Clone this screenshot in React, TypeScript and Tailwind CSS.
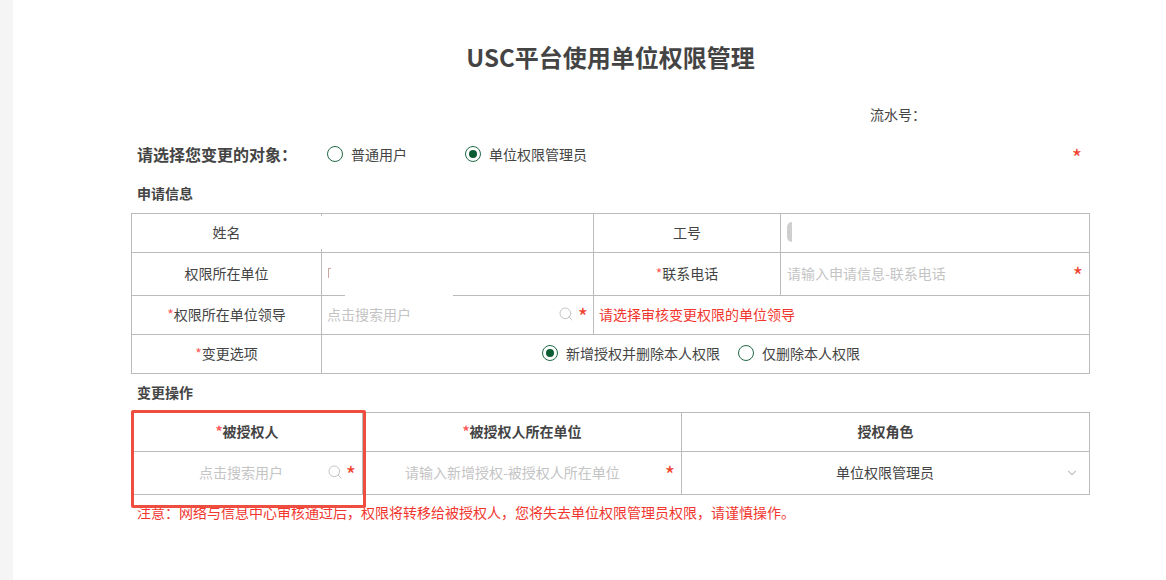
import { Search, ChevronDown } from 'lucide-react';

const Req = () => <span className="text-[#ff5a5a]">*</span>;

const Star = ({ className = '' }: { className?: string }) => (
    <span className={`text-[22px] leading-none text-[#f0442e] ${className}`}>*</span>
);

const Radio = ({ checked = false }: { checked?: boolean }) => (
    <span className="flex h-4 w-4 shrink-0 items-center justify-center rounded-full border border-[#1f6b47] bg-white">
        {checked && <span className="h-2 w-2 rounded-full bg-[#0b5c33]" />}
    </span>
);

const RadioOption = ({ label, checked }: { label: string; checked?: boolean }) => (
    <label className="flex items-center gap-2">
        <Radio checked={checked} />
        <span className="text-[14px] text-[#444]">{label}</span>
    </label>
);

const labelCell = 'border border-[#bbb] pb-[2px] text-center font-normal text-[14px] text-[#444]';
const inputCell = 'border border-[#bbb] pb-[2px] text-[14px] text-[#444]';
const headCell = 'border border-[#bbb] pb-[2px] text-[14px] font-bold text-[#444]';
const placeholder = 'text-[14px] text-[#c4c4c4]';

export default function App() {
    return (
        <div
            className="flex h-[580px] w-[1166px] overflow-hidden bg-white"
            style={{ fontFamily: '"Noto Sans CJK SC", "Noto Sans", sans-serif' }}
        >
            <div className="w-[13px] shrink-0 bg-[#f5f5f5]" />

            <main className="ml-[118px] w-[959px] shrink-0">
                <h1 className="pt-[40px] text-center text-[24px] leading-[33px] font-bold text-[#444]">
                    USC平台使用单位权限管理
                </h1>

                <div className="mt-[32px] flex justify-end pr-[164px] text-[14px] leading-[18px] text-[#444]">
                    流水号：
                </div>

                {/* Target selector */}
                <div className="mt-[20px] flex h-[22px] items-center pl-[6px]">
                    <span className="w-[190px] text-[16px] font-bold text-[#444]">请选择您变更的对象：</span>
                    <RadioOption label="普通用户" />
                    <div className="ml-[58px]">
                        <RadioOption label="单位权限管理员" checked />
                    </div>
                    <Star className="mt-[4px] ml-auto pr-[8px]" />
                </div>

                <h2 className="mt-[19px] pl-[6px] text-[14px] leading-[18px] font-bold text-[#444]">申请信息</h2>

                {/* Applicant table */}
                <div className="relative mt-[11px]">
                    <table className="w-[958px] table-fixed border-collapse">
                        <colgroup>
                            <col className="w-[190px]" />
                            <col className="w-[272px]" />
                            <col className="w-[187px]" />
                            <col className="w-[309px]" />
                        </colgroup>
                        <tbody>
                            <tr className="h-[39px]">
                                <td className={labelCell}>姓名</td>
                                <td className={inputCell} />
                                <td className={labelCell}>工号</td>
                                <td className={inputCell}>
                                    <span className="ml-[6px] block h-[20px] w-[5px] rounded-l-full bg-[#cfcfcf] blur-[0.5px]" />
                                </td>
                            </tr>
                            <tr className="h-[43px]">
                                <td className={labelCell}>权限所在单位</td>
                                <td className={inputCell}>
                                    <span className="ml-[6px] block h-[10px] w-[3px] border-t border-l border-[#c9a9a0]" />
                                </td>
                                <td className={labelCell}>
                                    <Req />联系电话
                                </td>
                                <td className={inputCell}>
                                    <div className="flex items-center justify-between px-[6px]">
                                        <span className={placeholder}>请输入申请信息-联系电话</span>
                                        <Star className="mt-[2px]" />
                                    </div>
                                </td>
                            </tr>
                            <tr className="h-[39px]">
                                <td className={labelCell}>
                                    <Req />权限所在单位领导
                                </td>
                                <td className={inputCell}>
                                    <div className="flex items-center justify-between px-[5px]">
                                        <span className={placeholder}>点击搜索用户</span>
                                        <span className="flex items-center gap-[4px]">
                                            <Search size={16} strokeWidth={1.5} className="text-[#c4c4c4]" />
                                            <Star className="mt-[2px]" />
                                        </span>
                                    </div>
                                </td>
                                <td colSpan={2} className="border border-[#bbb] pb-[2px] pl-[5px] text-[14px] text-[#f0362e]">
                                    请选择审核变更权限的单位领导
                                </td>
                            </tr>
                            <tr className="h-[39px]">
                                <td className={labelCell}>
                                    <Req />变更选项
                                </td>
                                <td colSpan={3} className={inputCell}>
                                    <div className="flex items-center justify-center gap-[18px] pr-[9px]">
                                        <RadioOption label="新增授权并删除本人权限" checked />
                                        <RadioOption label="仅删除本人权限" />
                                    </div>
                                </td>
                            </tr>
                        </tbody>
                    </table>
                    {/* blurred-out values */}
                    <div className="absolute top-[3px] left-[189px] h-[33px] w-[6px] bg-white" />
                    <div className="absolute top-[78px] left-[214px] h-[8px] w-[108px] bg-white" />
                </div>

                <h2 className="mt-[9px] pl-[6px] text-[14px] leading-[18px] font-bold text-[#444]">变更操作</h2>

                {/* Change table */}
                <div className="relative mt-[11px]">
                    <table className="w-[958px] table-fixed border-collapse">
                        <colgroup>
                            <col className="w-[231px]" />
                            <col className="w-[319px]" />
                            <col className="w-[408px]" />
                        </colgroup>
                        <tbody>
                            <tr className="h-[39px]">
                                <th className={headCell}>
                                    <Req />被授权人
                                </th>
                                <th className={headCell}>
                                    <Req />被授权人所在单位
                                </th>
                                <th className={headCell}>授权角色</th>
                            </tr>
                            <tr className="h-[43px]">
                                <td className={inputCell}>
                                    <div className="flex items-center pr-[6px] pl-[67px]">
                                        <span className={placeholder}>点击搜索用户</span>
                                        <span className="ml-auto flex items-center gap-[3px]">
                                            <Search size={16} strokeWidth={1.5} className="text-[#c4c4c4]" />
                                            <Star className="mt-[2px]" />
                                        </span>
                                    </div>
                                </td>
                                <td className={inputCell}>
                                    <div className="flex items-center pr-[6px] pl-[42px]">
                                        <span className={placeholder}>请输入新增授权-被授权人所在单位</span>
                                        <Star className="mt-[2px] ml-auto" />
                                    </div>
                                </td>
                                <td className={inputCell}>
                                    <div className="relative pr-[1px] text-center">
                                        单位权限管理员
                                        <ChevronDown size={14} className="absolute top-[4px] right-[10px] text-[#c4c4c4]" />
                                    </div>
                                </td>
                            </tr>
                        </tbody>
                    </table>
                    {/* annotation box drawn over the screenshot */}
                    <div className="absolute top-[-2px] left-0 h-[98px] w-[235px] rounded-[2px] border-[3px] border-[#ef4d3f]" />
                </div>

                <p className="mt-[8px] pl-[6px] text-[14px] leading-[18px] text-[#f0362e]">
                    注意：网络与信息中心审核通过后，权限将转移给被授权人，您将失去单位权限管理员权限，请谨慎操作。
                </p>
            </main>
        </div>
    );
}
